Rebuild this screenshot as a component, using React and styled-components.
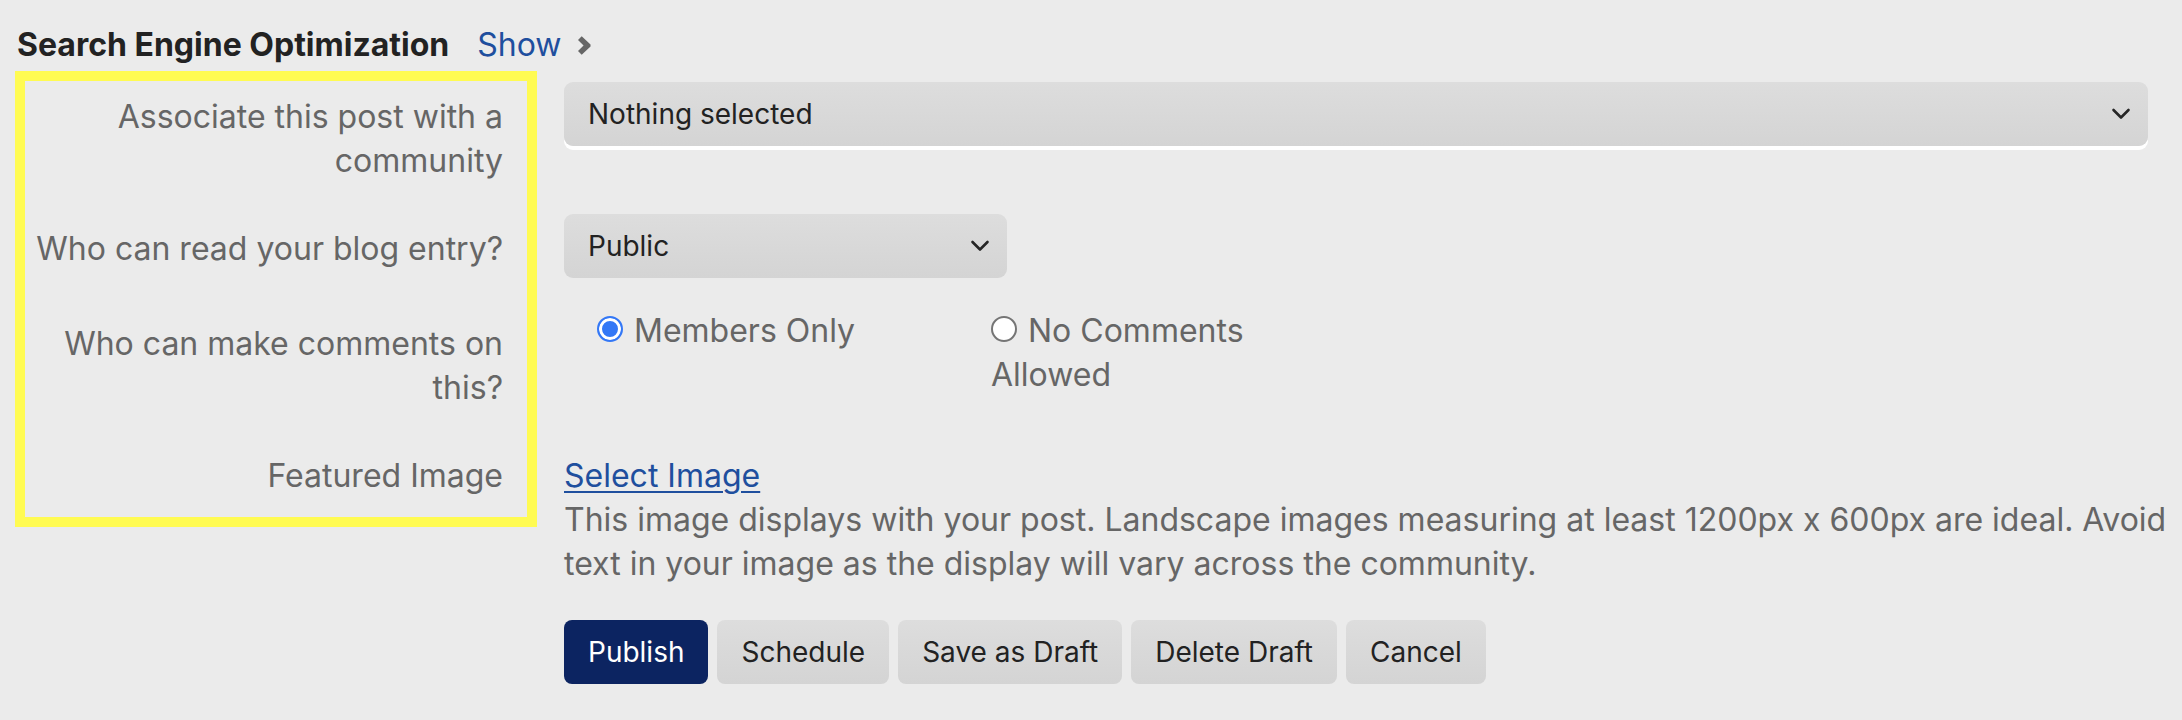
import React, { useState } from "react";
import styled, { createGlobalStyle } from "styled-components";

const GlobalStyle = createGlobalStyle`
  body {
    margin: 0;
    background: #ebebeb;
    font-family: Inter, "Noto Sans", sans-serif;
  }
`;

// Down chevron used by the select boxes
const Chevron = () => (
  <svg width="20" height="14" viewBox="0 0 20 14" aria-hidden="true">
    <path
      d="M2.5 3 L10 10.5 L17.5 3"
      fill="none"
      stroke="currentColor"
      strokeWidth="2.6"
      strokeLinecap="round"
      strokeLinejoin="round"
    />
  </svg>
);

const App = () => {
  const [comments, setComments] = useState("members");

  return (
    <StyledPage>
      <GlobalStyle />
      <TitleRow>
        <h2>Search Engine Optimization</h2>
        <ShowLink href="#">Show</ShowLink>
        <ShowArrow viewBox="0 0 14 20" aria-hidden="true">
          <path d="M4 0 L13.5 9 L13.5 11 L4 20 L0 16 L6 10 L0 4 Z" />
        </ShowArrow>
      </TitleRow>

      <FormGrid>
        <Highlight />

        <Label $row={1}>Associate this post with a community</Label>
        <Field $row={1}>
          <Select $wide>
            <span>Nothing selected</span>
            <Chevron />
          </Select>
        </Field>

        <Label $row={2}>Who can read your blog entry?</Label>
        <Field $row={2}>
          <Select>
            <span>Public</span>
            <Chevron />
          </Select>
        </Field>

        <Label $row={3}>Who can make comments on this?</Label>
        <Field $row={3}>
          <RadioGroup>
            <RadioOption onClick={() => setComments("members")}>
              <Radio $checked={comments === "members"} />
              Members Only
            </RadioOption>
            <RadioOption onClick={() => setComments("none")}>
              <Radio $checked={comments === "none"} />
              No Comments Allowed
            </RadioOption>
          </RadioGroup>
        </Field>

        <Label $row={4}>Featured Image</Label>
        <Field $row={4}>
          <ImageLink href="#">Select Image</ImageLink>
          <Help>
            This image displays with your post. Landscape images measuring at
            least 1200px x 600px are ideal. Avoid text in your image as the
            display will vary across the community.
          </Help>
          <Buttons>
            <Button $primary>Publish</Button>
            <Button>Schedule</Button>
            <Button>Save as Draft</Button>
            <Button>Delete Draft</Button>
            <Button>Cancel</Button>
          </Buttons>
        </Field>
      </FormGrid>
    </StyledPage>
  );
};

export default App;

const StyledPage = styled.div`
  padding: 23px 14px 30px 15px;
  font-size: 32px;
  line-height: 44px;
  color: #666;
`;

const TitleRow = styled.div`
  display: flex;
  align-items: center;
  padding-left: 2px;
  height: 44px;
  margin-bottom: 15px;

  h2 {
    margin: 0 28px 0 0;
    font-size: 32px;
    font-weight: 700;
    color: #222;
  }
`;

const ShowLink = styled.a`
  color: #1f4f9e;
  text-decoration: none;
  margin-right: 17px;
`;

const ShowArrow = styled.svg`
  width: 13px;
  height: 19px;
  fill: #666;
`;

const FormGrid = styled.div`
  display: grid;
  grid-template-columns: 522px 1fr;
  column-gap: 27px;
  row-gap: 31px;
`;

const Highlight = styled.div`
  grid-column: 1;
  grid-row: 1 / 5;
  align-self: start;
  margin-top: -11px;
  height: 456px;
  box-sizing: border-box;
  border: 10px solid #fffb52;
`;

const Label = styled.div`
  grid-column: 1;
  grid-row: ${(props) => props.$row};
  padding: 13px 34px 0 16px;
  text-align: right;
  color: #666;
`;

const Field = styled.div`
  grid-column: 2;
  grid-row: ${(props) => props.$row};
  min-width: 0;
`;

const Select = styled.div`
  display: flex;
  align-items: center;
  justify-content: space-between;
  box-sizing: border-box;
  width: ${(props) => (props.$wide ? "calc(100% - 20px)" : "443px")};
  height: 64px;
  padding: 0 17px 0 24px;
  border-radius: 9px;
  background: linear-gradient(#dddddd, #d4d4d4);
  color: #222;
  font-size: 28px;
  box-shadow: ${(props) => (props.$wide ? "0 4px 0 #fff" : "none")};

  svg {
    color: #262626;
  }
`;

const RadioGroup = styled.div`
  display: grid;
  grid-template-columns: 300px 300px;
  column-gap: 94px;
  padding-left: 33px;
`;

const RadioOption = styled.label`
  display: block;
  cursor: pointer;
  color: #666;
`;

const Radio = styled.span`
  display: inline-block;
  box-sizing: border-box;
  width: 26px;
  height: 26px;
  margin-right: 11px;
  vertical-align: baseline;
  border-radius: 50%;
  background: ${(props) => (props.$checked ? "#3478f6" : "#fff")};
  border: 2px solid ${(props) => (props.$checked ? "#3478f6" : "#757575")};
  box-shadow: ${(props) => (props.$checked ? "inset 0 0 0 3px #fff" : "none")};
`;

const ImageLink = styled.a`
  display: inline-block;
  margin-top: 13px;
  color: #1f4f9e;
  text-decoration: underline;
  text-decoration-thickness: 2px;
  text-underline-offset: 4px;
`;

const Help = styled.p`
  margin: 0 0 34px;
  color: #666;
`;

const Buttons = styled.div`
  display: flex;
  gap: 9px;
`;

const Button = styled.button`
  height: 64px;
  padding: 0 24px;
  border: none;
  border-radius: 8px;
  font-family: inherit;
  font-size: 28px;
  cursor: pointer;
  color: ${(props) => (props.$primary ? "#fff" : "#222")};
  background: ${(props) =>
    props.$primary ? "#0c2461" : "linear-gradient(#dddddd, #d4d4d4)"};
`;
